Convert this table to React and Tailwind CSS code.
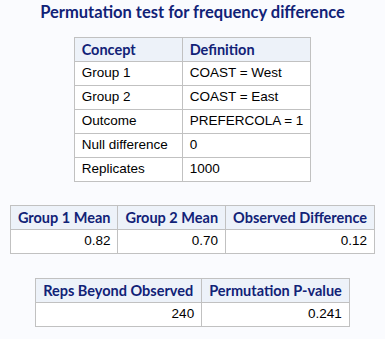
import React from "react";

const HEAD =
  "border border-[#c1c1c1] bg-[#edf2f9] text-[#112277] font-bold text-left px-[7px] h-[24px] text-[14.5px] whitespace-nowrap font-['Lato',sans-serif]";
const CELL =
  "border border-[#c1c1c1] bg-white text-black px-[7px] h-[24px] text-[13.5px] whitespace-nowrap font-['Liberation_Sans',Arial,sans-serif]";

const App = () => {
  const concepts = [
    ["Group 1", "COAST = West"],
    ["Group 2", "COAST = East"],
    ["Outcome", "PREFERCOLA = 1"],
    ["Null difference", "0"],
    ["Replicates", "1000"],
  ];

  return (
    <div className="min-h-screen w-full bg-[#fafbfe] pt-[2px]">
      {/* Title */}
      <h1 className="text-center text-[16.5px] leading-[20px] font-bold text-[#112277] font-['Lato',sans-serif]">
        Permutation test for frequency difference
      </h1>

      {/* Concept table */}
      <table className="mx-auto mt-[15px] border-collapse">
        <thead>
          <tr>
            <th className={HEAD + " w-[108px]"}>Concept</th>
            <th className={HEAD + " w-[125px]"}>Definition</th>
          </tr>
        </thead>
        <tbody>
          {concepts.map(([a, b]) => (
            <tr key={a}>
              <td className={CELL}>{a}</td>
              <td className={CELL}>{b}</td>
            </tr>
          ))}
        </tbody>
      </table>

      {/* Means table */}
      <table className="mx-auto mt-[23px] border-collapse">
        <thead>
          <tr>
            <th className={HEAD + " w-[107px]"}>Group 1 Mean</th>
            <th className={HEAD + " w-[106px]"}>Group 2 Mean</th>
            <th className={HEAD + " w-[148px]"}>Observed Difference</th>
          </tr>
        </thead>
        <tbody>
          <tr>
            <td className={CELL + " text-right"}>0.82</td>
            <td className={CELL + " text-right"}>0.70</td>
            <td className={CELL + " text-right"}>0.12</td>
          </tr>
        </tbody>
      </table>

      {/* P-value table */}
      <table className="mx-auto mt-[24px] border-collapse">
        <thead>
          <tr>
            <th className={HEAD + " w-[166px]"}>Reps Beyond Observed</th>
            <th className={HEAD + " w-[144px]"}>Permutation P-value</th>
          </tr>
        </thead>
        <tbody>
          <tr>
            <td className={CELL + " text-right"}>240</td>
            <td className={CELL + " text-right"}>0.241</td>
          </tr>
        </tbody>
      </table>
    </div>
  );
};

export default App;
